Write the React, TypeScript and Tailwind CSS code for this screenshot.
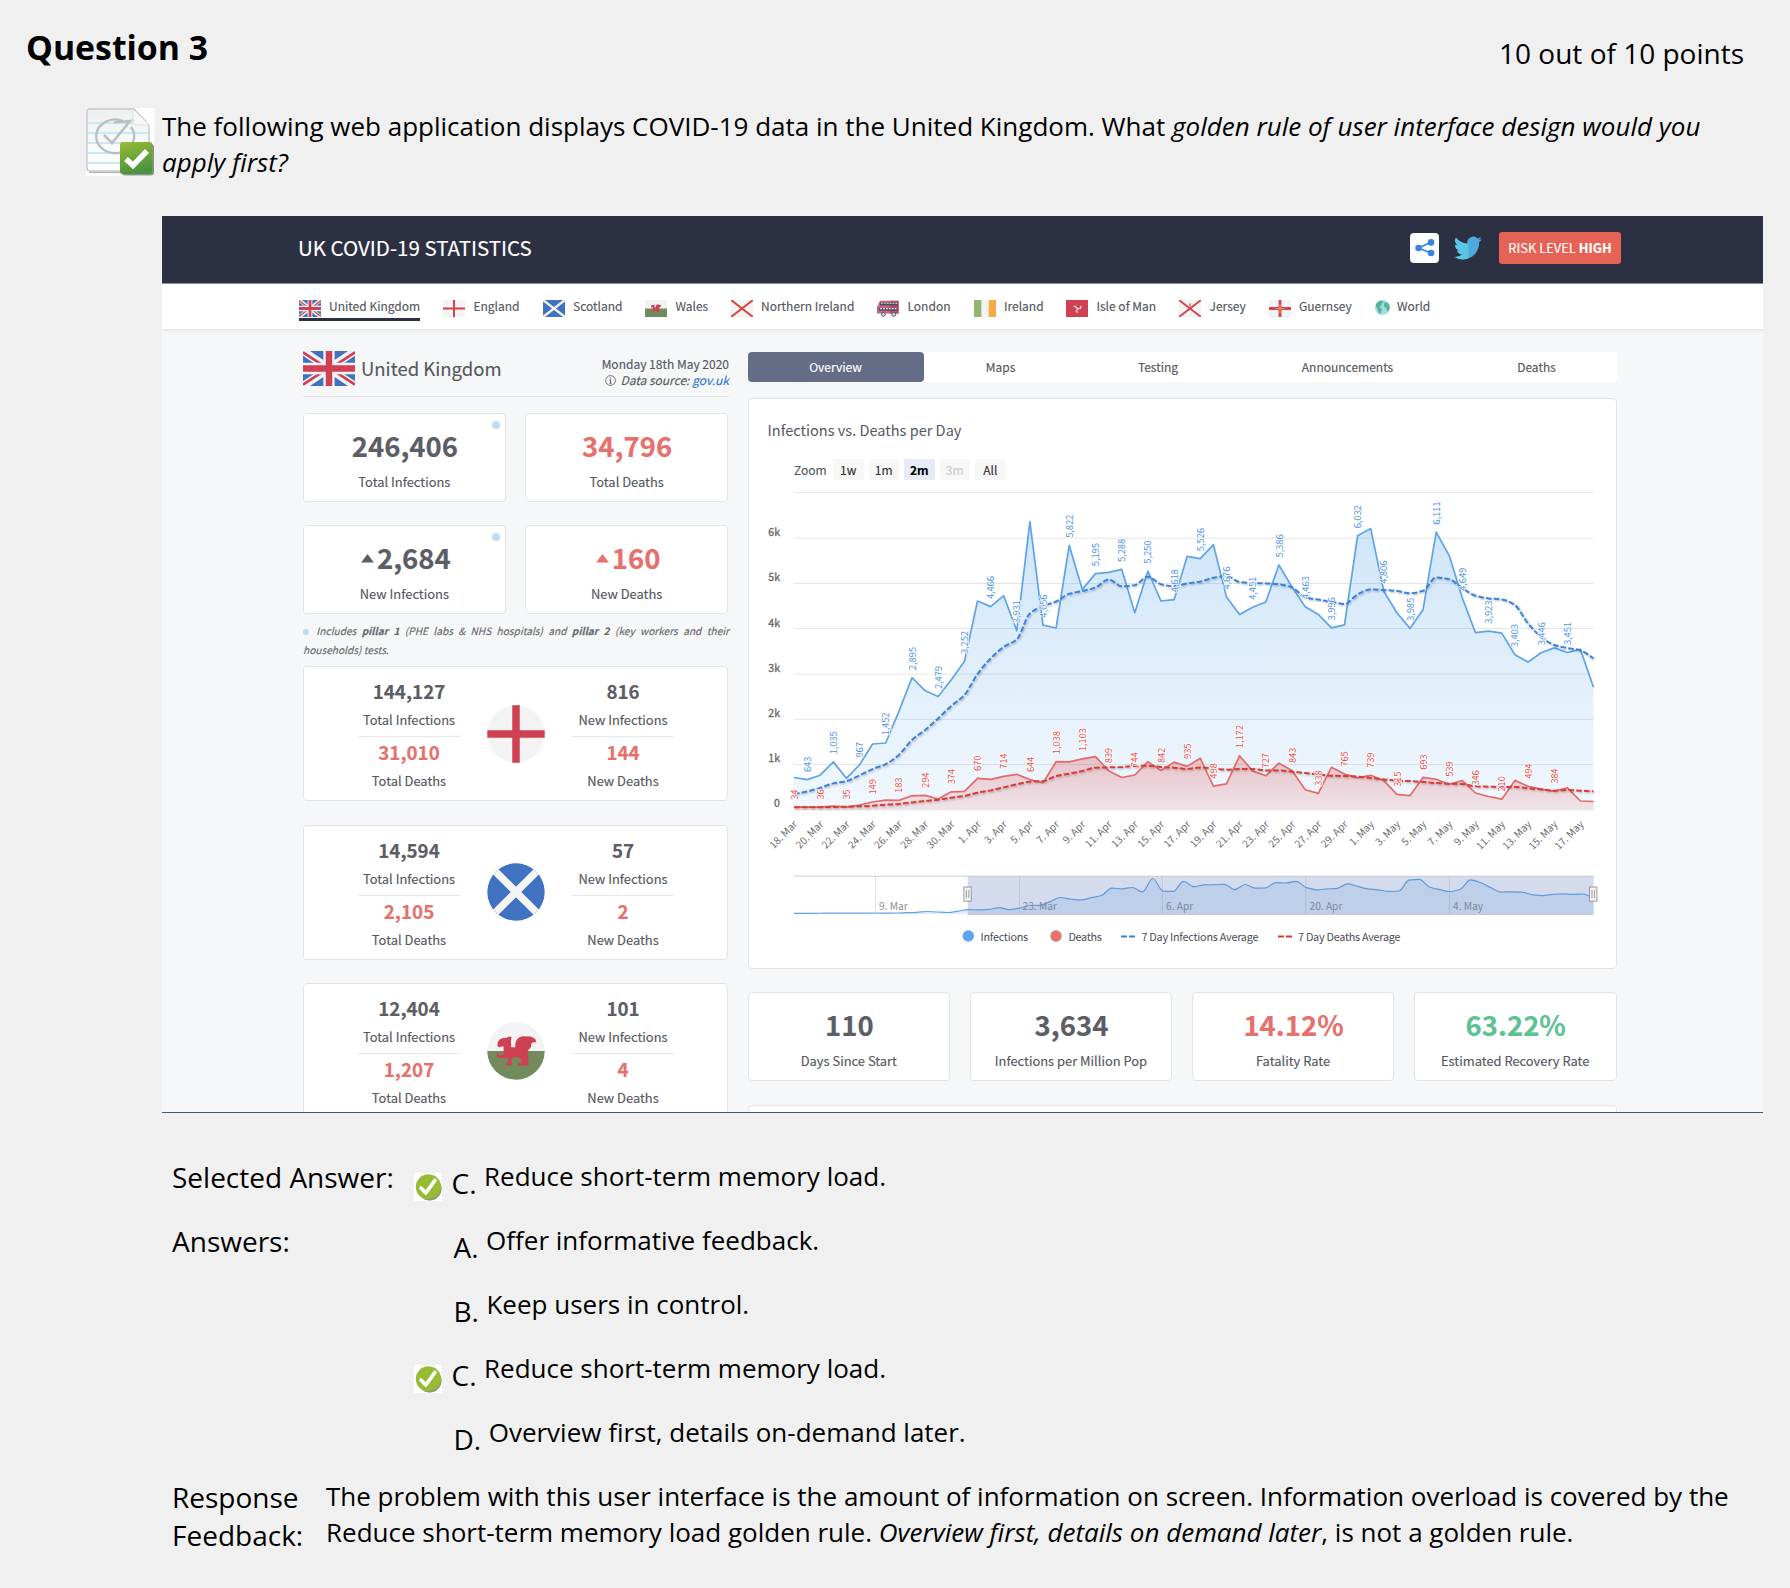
import React from "react";

/* ---------- data ---------- */

const infections = [
  690, 643, 740, 1035, 672, 967, 1430, 1452, 2150, 2895, 2608, 2479, 2850, 3252, 4590, 4466, 4707, 3931, 6343, 4056,
  3993, 5822, 4847, 5195, 5223, 5288, 4330, 5250, 4590, 4618, 5577, 5526, 5834, 4676, 4295, 4451, 4567, 5386, 4900,
  4463, 4295, 3996, 4065, 6032, 6190, 4806, 4330, 3985, 4405, 6111, 5590, 4649, 3890, 3923, 3880, 3403, 3240, 3446,
  3553, 3451, 3520, 2684,
];

const deaths = [
  34, 38, 36, 55, 35, 80, 149, 190, 183, 284, 294, 215, 374, 382, 670, 650, 714, 760, 644, 570, 1038, 1034, 1103, 1150,
  839, 690, 744, 1040, 842, 1030, 935, 1115, 498, 550, 1172, 830, 727, 1005, 843, 420, 338, 915, 765, 680, 739, 620,
  315, 288, 693, 650, 539, 620, 346, 270, 210, 625, 494, 430, 384, 465, 170, 160,
];

const infectionsAvg = [
  320, 380, 460, 560, 610, 735, 875, 985, 1190, 1520, 1740, 1995, 2270, 2510, 2975, 3320, 3575, 3740, 4315, 4480, 4580,
  4750, 4810, 4885, 5068, 4915, 4940, 5127, 4960, 4915, 4980, 5016, 5105, 5135, 5010, 4987, 4980, 4957, 4890, 4670, 4620,
  4575, 4523, 4735, 4847, 4832, 4810, 4760, 4815, 5112, 5068, 4870, 4707, 4648, 4626, 4500, 4095, 3800, 3617, 3551, 3500,
  3322,
];

const deathsAvg = [
  30, 30, 30, 37, 44, 52, 66, 88, 103, 140, 170, 199, 243, 280, 354, 405, 471, 538, 597, 611, 722, 773, 832, 906, 913,
  920, 943, 950, 920, 906, 877, 913, 891, 862, 877, 877, 847, 847, 818, 788, 759, 729, 722, 707, 678, 648, 619, 611, 589,
  567, 552, 545, 494, 486, 479, 479, 449, 427, 398, 412, 398, 383,
];

const earlyMarch = [10, 20, 25, 30, 40, 50, 45, 60, 70, 60, 70, 130, 200, 340, 250, 160, 400];

const fmt = (n: number) => n.toLocaleString("en-US");

/* ---------- flags ---------- */

type FlagProps = { className?: string };

function UnionFlag({ className = "" }: FlagProps) {
  return (
    <svg viewBox="0 0 60 40" preserveAspectRatio="none" className={className}>
      <rect width="60" height="40" fill="#3f72c1" />
      <path d="M0 0L60 40M60 0L0 40" stroke="#f3f3f3" strokeWidth="9" />
      <path d="M0 1.5L27 19M33 21L60 38.5M60 1.5L33 19M27 21L0 38.5" stroke="#d04053" strokeWidth="3" />
      <path d="M30 0V40M0 20H60" stroke="#f3f3f3" strokeWidth="13" />
      <path d="M30 0V40M0 20H60" stroke="#d04053" strokeWidth="7.5" />
    </svg>
  );
}

function England({ className = "" }: FlagProps) {
  return (
    <svg viewBox="0 0 22 17" className={className}>
      <rect width="22" height="17" fill="#f3f3f3" />
      <path d="M11 0V17M0 8.5H22" stroke="#d6404f" strokeWidth="2" />
    </svg>
  );
}

function Scotland({ className = "" }: FlagProps) {
  return (
    <svg viewBox="0 0 22 17" className={className}>
      <rect width="22" height="17" fill="#3f72c1" />
      <path d="M0 0L22 17M22 0L0 17" stroke="#f3f3f3" strokeWidth="2.4" />
    </svg>
  );
}

const dragonPath =
  "M10.4 22.6C10.8 19 13 16.2 17 16L20.5 15.6L22 14.4L24.6 15L24 18L24.2 25.3H28.4C27.6 19.5 30.6 14.6 36.5 14.3L44 14.6L48.3 17L49.4 20.6C46.8 19.8 44.6 20.2 44.2 22.4C44.4 24.8 43.4 26.4 41.6 27.4C41.4 29.2 41 30.2 40 30.6L41.4 33V43.4H31V40.8H34.4L33.8 37L31.6 35.4H26.4L24.4 37.4V43.4H18.6V40.8H20.8V36H12L9.8 35V31.3H12.4L12.6 33.4L16.6 32.6V24.4H14L13 25.2L10.6 24.6Z";

function Wales({ className = "" }: FlagProps) {
  return (
    <svg viewBox="0 0 22 17" className={className}>
      <rect width="22" height="8.5" fill="#f3f3f3" />
      <rect y="8.5" width="22" height="8.5" fill="#738b5c" />
      <path d={dragonPath} transform="translate(3.2 .8) scale(.265)" fill="#d04053" />
    </svg>
  );
}

function NorthernIreland({ className = "" }: FlagProps) {
  return (
    <svg viewBox="0 0 22 17" className={className}>
      <rect width="22" height="17" fill="#f3f3f3" />
      <path d="M0 0L22 17M22 0L0 17" stroke="#d8453c" strokeWidth="2" />
    </svg>
  );
}

function Bus({ className = "" }: FlagProps) {
  return (
    <svg viewBox="0 0 22 17" className={className}>
      <path d="M3.5 .8H21.6V13.6H1L1.2 4.5Q1.8 1.4 3.5 .8Z" fill="#dd5c7e" />
      <path d="M13 .8H21.6V13.6H13Z" fill="#cc3f68" />
      <path d="M3.2 2.6H21V5.4H2.9Z" fill="#3d5566" />
      <path d="M2.2 7.8H21V10.8H1.8Z" fill="#3d5566" />
      <path d="M4 3.3H20.4M3.2 8.6H20.4" stroke="#e9eef2" strokeWidth="1.1" strokeDasharray="1.8 1.1" />
      <path d="M.6 6V13.5" stroke="#4c6475" strokeWidth=".9" />
      <circle cx="6.3" cy="14.4" r="1.9" fill="#d9e8f0" stroke="#40596b" strokeWidth="1" />
      <circle cx="16.8" cy="14.4" r="1.9" fill="#d9e8f0" stroke="#40596b" strokeWidth="1" />
    </svg>
  );
}

function Ireland({ className = "" }: FlagProps) {
  return (
    <svg viewBox="0 0 22 17" className={className}>
      <rect width="22" height="17" fill="#f3f3f3" />
      <rect width="7.3" height="17" fill="#90b56e" />
      <rect x="14.7" width="7.3" height="17" fill="#f7ab45" />
    </svg>
  );
}

function IsleOfMan({ className = "" }: FlagProps) {
  return (
    <svg viewBox="0 0 22 17" className={className}>
      <rect width="22" height="17" fill="#d04053" />
      <path
        d="M11.4 8.8L9.4 6.2L7.6 6.6M11.4 8.8L14.6 8.2L14.8 5.8M11.4 8.8L10.2 11.4L12 12.4"
        fill="none"
        stroke="#f6dfe0"
        strokeWidth="1.3"
      />
    </svg>
  );
}

function Jersey({ className = "" }: FlagProps) {
  return (
    <svg viewBox="0 0 22 17" className={className}>
      <rect width="22" height="17" fill="#f3f3f3" />
      <path d="M0 0L22 17M22 0L0 17" stroke="#d6404f" strokeWidth="1.8" />
      <path d="M9.8 3.4H12.2L11.9 6L11 7L10.1 6Z" fill="#e58a5a" />
    </svg>
  );
}

function Guernsey({ className = "" }: FlagProps) {
  return (
    <svg viewBox="0 0 22 17" className={className}>
      <rect width="22" height="17" fill="#f3f3f3" />
      <path d="M11 0V17M0 8.5H22" stroke="#d6404f" strokeWidth="2.8" />
      <path d="M11 4.2V12.8M6.4 8.5H15.6" stroke="#f3ac55" strokeWidth=".8" />
    </svg>
  );
}

function Globe({ className = "" }: FlagProps) {
  return (
    <svg viewBox="0 0 16 16" className={className}>
      <circle cx="8" cy="8" r="8" fill="#a3dbe9" />
      <path d="M1 4.2L4.5 1L7.5 .8L9 2.5L7 4L6.8 6L4.6 7.2L6.4 9L7.6 10.5L6.4 13L5.6 15.2L3.4 13L3 10L1.4 7.6Z" fill="#55b58e" />
      <path d="M10.5 2.4L13.6 3.2L15.4 6L15.6 9.4L13.6 12.4L12.4 10.6L12.4 8.4L10 7.4L9.6 5Z" fill="#55b58e" />
    </svg>
  );
}

/* ---------- chart ---------- */

const PLOT_X = 46;
const STEP = 799.5 / 61;
const ZERO = 300.7;
const px = (i: number) => PLOT_X + i * STEP;
const py = (v: number) => ZERO - v * 0.04525;

const linePath = (vals: number[]) =>
  vals.map((v, i) => `${i ? "L" : "M"}${px(i).toFixed(1)} ${py(v).toFixed(1)}`).join("");

const areaPath = (vals: number[]) => `${linePath(vals)}V301.6H${PLOT_X}Z`;

/* Monotone cubic curve through the points. */
function smooth(pts: number[][]) {
  const n = pts.length;
  const s = pts.slice(1).map((p, i) => (p[1] - pts[i][1]) / (p[0] - pts[i][0]));
  const m = pts.map((_, i) => {
    if (i === 0) return s[0];
    if (i === n - 1) return s[n - 2];
    if (s[i - 1] * s[i] <= 0) return 0;
    return (2 * s[i - 1] * s[i]) / (s[i - 1] + s[i]);
  });
  let d = `M${pts[0][0]} ${pts[0][1]}`;
  for (let i = 1; i < n; i++) {
    const h = (pts[i][0] - pts[i - 1][0]) / 3;
    d += `C${(pts[i - 1][0] + h).toFixed(1)} ${(pts[i - 1][1] + m[i - 1] * h).toFixed(1)} ${(pts[i][0] - h).toFixed(1)} ${(pts[i][1] - m[i] * h).toFixed(1)} ${pts[i][0].toFixed(1)} ${pts[i][1].toFixed(1)}`;
  }
  return d;
}

const avgPath = (vals: number[]) => smooth(vals.map((v, i) => [px(i), py(v)]));

const navPath = smooth([...earlyMarch, ...infections].map((v, i) => [PLOT_X + i * 10.25, 405.4 - v * 0.0055]));

const dateLabel = (i: number) => {
  const d = 18 + i;
  if (d <= 31) return `${d}. Mar`;
  if (d <= 61) return `${d - 31}. Apr`;
  return `${d - 61}. May`;
};

const evens = Array.from({ length: 31 }, (_, i) => i * 2);
const gridYs = [-15.5, 30.2, 75.5, 120.5, 166.2, 211.3, 256.5, 301.8];

function PointLabel({ i, v, color }: { i: number; v: number; color: string }) {
  const t = fmt(v);
  const len = t.length > 3 ? 23.2 : t.length * 5.15;
  const place = `translate(${px(i) + 3.6} ${py(v) - 7.5}) rotate(-90)`;
  return (
    <text
      transform={place}
      fontSize="9.6"
      fill={color}
      stroke="#fff"
      strokeWidth="1.4"
      paintOrder="stroke"
      strokeLinejoin="round"
      textLength={len}
    >
      {t}
    </text>
  );
}

function Handle({ x }: { x: number }) {
  return (
    <g transform={`translate(${x} 386)`}>
      <rect x="-3.7" y="-7" width="7.4" height="14.2" fill="#f2f2f2" stroke="#999" />
      <path d="M-1.2 -4V4M1.2 -4V4" stroke="#999" strokeWidth=".9" />
    </g>
  );
}

function Chart() {
  return (
    <svg viewBox="0 -28 868 468" className="block h-[468px] w-[868px]">
      <defs>
        <linearGradient id="blueFill" x1="0" y1="0" x2="0" y2="1">
          <stop offset="0" stopColor="#4f9fe8" stopOpacity=".27" />
          <stop offset="1" stopColor="#4f9fe8" stopOpacity=".08" />
        </linearGradient>
        <linearGradient id="redFill" x1="0" y1="0" x2="0" y2="1">
          <stop offset="0" stopColor="#e05555" stopOpacity=".32" />
          <stop offset="1" stopColor="#e05555" stopOpacity=".12" />
        </linearGradient>
        <filter id="soft" x="-5%" y="-20%" width="110%" height="140%">
          <feDropShadow dx="1" dy="1" stdDeviation="0.8" floodColor="#000" floodOpacity=".3" />
        </filter>
      </defs>

      {gridYs.map((y) => (
        <path key={y} d={`M${PLOT_X} ${y}H845.5`} stroke="#e6e6e6" />
      ))}
      <g fontSize="10.6" fill="#666" textAnchor="end">
        {["6k", "5k", "4k", "3k", "2k", "1k", "0"].map((t, i) => (
          <text key={t} x="32" y={28.2 + i * 45.2} stroke="#666" strokeWidth=".3">
            {t}
          </text>
        ))}
      </g>

      <path d={areaPath(infections)} fill="url(#blueFill)" />
      <path d={linePath(infections)} fill="none" stroke="#5ea3ea" strokeWidth="1.7" strokeLinejoin="round" />
      <path d={areaPath(deaths)} fill="url(#redFill)" />
      <path d={linePath(deaths)} fill="none" stroke="#e26b6b" strokeWidth="1.7" strokeLinejoin="round" />
      <g fill="none" strokeWidth="2" strokeDasharray="5.6 2.2" filter="url(#soft)">
        <path d={avgPath(infectionsAvg)} stroke="#3a82dc" />
        <path d={avgPath(deathsAvg)} stroke="#dc3a35" />
      </g>

      {infections.map((v, i) => i % 2 === 1 && i < 61 && <PointLabel key={i} i={i} v={v} color="#5094ea" />)}
      {deaths.map((v, i) => i % 2 === 0 && i < 60 && <PointLabel key={i} i={i} v={v} color="#e4524c" />)}

      <g fontSize="10.2" fill="#6b6b6b" textAnchor="end">
        {evens.map((i) => (
          <text key={i} transform={`translate(${px(i) + 4} 317) rotate(-45)`}>
            {dateLabel(i)}
          </text>
        ))}
      </g>

      {/* range navigator */}
      {[127.5, 271.5, 414.4, 557.8, 701.4].map((x) => (
        <path key={x} d={`M${x} 368V406`} stroke="#e2e2e2" />
      ))}
      <path d={`${navPath}V406H${PLOT_X}Z`} fill="#4f9fe8" fillOpacity=".18" />
      <path d={navPath} fill="none" stroke="#5ea3ea" strokeWidth="1.2" />
      <g fontSize="10.2" fill="#8c8c8c">
        {["9. Mar", "23. Mar", "6. Apr", "20. Apr", "4. May"].map((t, i) => (
          <text key={t} x={[131, 274.5, 418, 561.5, 705][i]} y="402.3">
            {t}
          </text>
        ))}
      </g>
      <rect x="219.6" y="368" width="626" height="38" fill="#6a83be" fillOpacity=".29" />
      <path d="M46 368.2H845.5" stroke="#cccccc" />
      <path d="M219.6 406.3H845.5" stroke="#b9bfca" />
      <Handle x={219.6} />
      <Handle x={845.2} />

      {/* legend */}
      <circle cx="220.3" cy="428" r="5.7" fill="#62a4ec" />
      <circle cx="308" cy="428" r="5.7" fill="#e5716e" />
      <path d="M373 428.5H387" stroke="#3a82dc" strokeWidth="2" strokeDasharray="6 2" />
      <path d="M530 428.5H544" stroke="#dc3a35" strokeWidth="2" strokeDasharray="6 2" />
      <g fontSize="10.8" fill="#4a4d55">
        <text x="232.6" y="432.5" textLength="47.5">Infections</text>
        <text x="320.4" y="432.5" textLength="33.5">Deaths</text>
        <text x="393.4" y="432.5" textLength="117">7 Day Infections Average</text>
        <text x="550" y="432.5" textLength="102.5">7 Day Deaths Average</text>
      </g>
    </svg>
  );
}

/* ---------- pieces ---------- */

const navItems: [string, React.FC<FlagProps>][] = [
  ["United Kingdom", UnionFlag],
  ["England", England],
  ["Scotland", Scotland],
  ["Wales", Wales],
  ["Northern Ireland", NorthernIreland],
  ["London", Bus],
  ["Ireland", Ireland],
  ["Isle of Man", IsleOfMan],
  ["Jersey", Jersey],
  ["Guernsey", Guernsey],
];

const cardBase = "rounded-[4px] border border-[#e2e4e7] bg-white";

function Up({ className }: { className: string }) {
  return (
    <svg viewBox="0 0 12 8" className={`mt-[3px] mr-[3px] h-[8.5px] w-[13px] ${className}`}>
      <path d="M0 8L6 0L12 8Z" fill="currentColor" />
    </svg>
  );
}

type StatProps = { value: string; label: string; color: string; up?: boolean; dot?: boolean };

function StatCard({ value, label, color, up, dot }: StatProps) {
  return (
    <div className={`relative flex h-[89px] flex-col items-center pt-[15px] ${cardBase}`}>
      <div className={`flex h-8 items-center text-[27.5px] leading-8 font-bold ${color} ${up ? "pl-[3px]" : "pl-px"}`}>
        {up && <Up className={color} />}
        {value}
      </div>
      <div className="mt-[11px] text-[12.9px] leading-5 text-[#55585f]">{label}</div>
      {dot && <span className="absolute top-[7px] right-[5px] size-2 rounded-full bg-[#c1daf0]" />}
    </div>
  );
}

function NationColumn({ kind, inf, dead }: { kind: string; inf: string; dead: string }) {
  return (
    <div className="flex w-[102px] flex-col items-center text-[12.9px] leading-5 text-[#55585f]">
      <div className="text-[18.8px] leading-6 font-bold text-[#5c5e66]">{inf}</div>
      <div className="mt-[7px]">{kind} Infections</div>
      <div className="mt-[6px] h-px w-full bg-[#e6e8ea]" />
      <div className="mt-[3px] text-[18.8px] leading-6 font-bold text-[#e6706b]">{dead}</div>
      <div className="mt-[7px]">{kind} Deaths</div>
    </div>
  );
}

function NationCard({ data, children }: { data: string[]; children: React.ReactNode }) {
  return (
    <div className={`flex h-[135px] justify-between pt-[12px] pr-[53px] pl-[54px] ${cardBase}`}>
      <NationColumn kind="Total" inf={data[0]} dead={data[1]} />
      <svg viewBox="0 0 58 58" className="mt-[25.5px] size-[58px]">
        {children}
      </svg>
      <NationColumn kind="New" inf={data[2]} dead={data[3]} />
    </div>
  );
}

function ShareIcon() {
  return (
    <div className="flex h-[30px] w-[29px] items-center justify-center rounded-[4px] bg-white">
      <svg viewBox="0 0 20 18" className="h-[18px] w-[20px]">
        <path d="M3.5 9L16 3.2M3.5 9L16 14" stroke="#3585dd" strokeWidth="1.8" />
        <circle cx="3.6" cy="9" r="3.3" fill="#3585dd" />
        <circle cx="16" cy="3.4" r="3.3" fill="#3585dd" />
        <circle cx="16" cy="14" r="3.3" fill="#3585dd" />
      </svg>
    </div>
  );
}

function TwitterIcon() {
  const bird =
    "M23.95 4.57a10 10 0 0 1-2.82.77 4.96 4.96 0 0 0 2.16-2.72 9.9 9.9 0 0 1-3.12 1.19 4.92 4.92 0 0 0-8.38 4.48A13.93 13.93 0 0 1 1.64 3.16a4.92 4.92 0 0 0 1.52 6.57 4.9 4.9 0 0 1-2.23-.61v.06a4.92 4.92 0 0 0 3.95 4.83 5 5 0 0 1-2.21.08 4.94 4.94 0 0 0 4.6 3.42A9.87 9.87 0 0 1 0 19.54a14 14 0 0 0 7.55 2.21c9.05 0 14-7.5 14-13.98 0-.21 0-.42-.02-.63a9.94 9.94 0 0 0 2.46-2.55z";
  return (
    <svg viewBox="0 0 24 24" className="size-[28px]">
      <defs>
        <clipPath id="birdLeft">
          <rect width="12.4" height="24" />
        </clipPath>
      </defs>
      <path d={bird} fill="#4fa9dd" />
      <path d={bird} fill="#5bc6e6" clipPath="url(#birdLeft)" />
    </svg>
  );
}

function QuestionIcon() {
  return (
    <svg viewBox="0 0 68 68" className="h-[68px] w-[68px] shrink-0">
      <defs>
        <linearGradient id="page" x1="0" y1="0" x2="0" y2="1">
          <stop offset="0" stopColor="#eef0f0" />
          <stop offset="1" stopColor="#fff" />
        </linearGradient>
        <linearGradient id="tick" x1="0" y1="0" x2=".3" y2="1">
          <stop offset="0" stopColor="#9bbb34" />
          <stop offset="1" stopColor="#4a9440" />
        </linearGradient>
      </defs>
      <rect width="68" height="68" fill="#fff" />
      <path d="M3 1H48L63 17V60Q63 63 60 63H4Q1 63 1 60V3Q1 1 3 1Z" fill="url(#page)" stroke="#c3c6c6" strokeWidth="1.4" />
      <path d="M3 64.5H60" stroke="#aaa" strokeWidth="1" />
      <path d="M2 15H60M2 25H62M2 35H62M2 45H62M2 55H62" stroke="#c9e9f7" strokeWidth="1.8" />
      <path d="M47 1L63 17H51Q47 17 47 13Z" fill="#f7f7f7" stroke="#dcdcdc" />
      <path d="M51 0H68V20L63 16Z" fill="#fff" />
      <path d="M37 13A19 16.8 0 1 0 45 19" fill="none" stroke="#bcbfc0" strokeWidth="2.4" />
      <path d="M18 27L26 35L44 13L28 14.5" fill="none" stroke="#bcbfc0" strokeWidth="2.6" />
      <rect x="36" y="36" width="32" height="31.5" rx="3" fill="#8d938a" />
      <rect x="34" y="34" width="32.5" height="32" rx="3" fill="url(#tick)" />
      <path d="M40 51L47 57.5L61 43" fill="none" stroke="#fff" strokeWidth="5.5" />
    </svg>
  );
}

function CorrectIcon() {
  return (
    <svg viewBox="0 0 28 28" className="size-[28px]">
      <rect width="28" height="28" fill="#fff" />
      <circle cx="15.6" cy="15.6" r="12" fill="#8b8f86" />
      <circle cx="14.4" cy="13.8" r="12.6" fill="#99bb33" />
      <path d="M7 15L11.8 20L20.8 7.5" fill="none" stroke="#fff" strokeWidth="3.8" strokeLinecap="round" strokeLinejoin="round" />
    </svg>
  );
}

type AnswerProps = { label?: string; letter: string; text: string; correct?: boolean; indent: string };

function AnswerRow({ label, letter, text, correct, indent }: AnswerProps) {
  return (
    <div className="flex h-16">
      <div className="w-[242px] shrink-0 text-[28px] leading-[38px]">{label}</div>
      <div className="w-[37.5px] shrink-0 pt-[15px]">{correct && <CorrectIcon />}</div>
      <div className={`flex ${indent}`}>
        <div className="pt-[6px] text-[28px] leading-[38px]">{letter}</div>
        <div className="ml-[7.5px] text-[26px] leading-[37px]">{text}</div>
      </div>
    </div>
  );
}

const sans = "font-['Noto_Sans_CJK_SC','Noto_Sans',sans-serif]";

function Dashboard() {
  return (
    <div
      className={`ml-[162px] h-[897px] w-[1601px] overflow-hidden border-b border-[#3f5872] bg-[#f6f7f9] text-[#55585f] [-webkit-text-stroke:0.15px] ${sans}`}
    >
      <header className="flex h-[68px] items-center border-b border-[#8a8e9b] bg-[#2b3042] pr-[142px] pb-[3px] pl-[136px]">
        <h2 className="mt-[-3px] flex-1 text-[20.5px] leading-8 text-white">UK COVID-19 STATISTICS</h2>
        <div className="flex items-center">
          <ShareIcon />
          <div className="ml-[15px]">
            <TwitterIcon />
          </div>
          <div className="ml-[17px] flex h-[32px] w-[122px] items-center justify-center rounded-[3px] bg-[#e66255] text-[12.9px] whitespace-pre text-white">
            RISK LEVEL <b>HIGH</b>
          </div>
        </div>
      </header>

      <nav className="h-[46px] border-b border-[#e6e8eb] bg-white pl-[137px] text-[12px] shadow-[0_1px_3px_rgba(0,0,0,0.06)]">
        <div className="grid grid-cols-[144.4px_99.6px_102.5px_85.5px_146.5px_96.5px_92.5px_113px_89.5px_106px_60px] pt-[14px]">
          {navItems.map(([name, Flag], i) => (
            <div key={name} className="flex">
              <div className={`flex h-[23px] items-start ${i === 0 ? "border-b-[3px] border-[#2b3042]" : ""}`}>
                <Flag className="mt-[2px] mr-[8px] h-[17px] w-[22px]" />
                <span className="mt-[-2px] leading-5 whitespace-nowrap">{name}</span>
              </div>
            </div>
          ))}
          <div className="flex items-start">
            <Globe className="mt-[2px] mr-[7px] size-[15px]" />
            <span className="mt-[-2px] leading-5">World</span>
          </div>
        </div>
      </nav>

      <div className="flex gap-[19.5px] pl-[141px]">
        <section className="w-[425px] pt-[21px]">
          <div className="-mr-px flex h-[46px] border-b border-[#e3e5e8]">
            <UnionFlag className="h-[35px] w-[52px]" />
            <h3 className="ml-[6px] flex-1 text-[18.5px] leading-[34px]">United Kingdom</h3>
            <div className="text-right text-[12px] leading-4">
              <div className="pt-[5px]">Monday 18th May 2020</div>
              <div className="flex items-center justify-end gap-1 italic">
                <svg viewBox="0 0 12 12" className="size-[11px]" fill="none" stroke="#55585f">
                  <circle cx="6" cy="6" r="5.3" strokeWidth=".9" />
                  <path d="M6 5V9M4.8 5.2H6M4.8 9H7.2M6 2.6V3.8" strokeWidth="1" />
                </svg>
                <span>
                  Data source: <span className="text-[#3079d8]">gov.uk</span>
                </span>
              </div>
            </div>
          </div>

          <div className="mt-4 grid grid-cols-2 gap-x-[19.5px] gap-y-[23px]">
            <StatCard value="246,406" label="Total Infections" color="text-[#5c5e66]" dot />
            <StatCard value="34,796" label="Total Deaths" color="text-[#e6706b]" />
            <StatCard value="2,684" label="New Infections" color="text-[#5c5e66]" up dot />
            <StatCard value="160" label="New Deaths" color="text-[#e6706b]" up />
          </div>

          <p className="-mr-px h-[52px] pt-[8px] text-justify text-[10.15px] leading-[18.5px] text-[#676a71] italic">
            <span className="mr-[2px] inline-block size-[6px] rounded-full bg-[#c1daf0]" /> Includes <b>pillar 1</b> (PHE labs &amp; NHS
            hospitals) and <b>pillar 2</b> (key workers and their households) tests.
          </p>

          <div className="flex flex-col gap-[23.6px]">
            <NationCard data={["144,127", "31,010", "816", "144"]}>
              <circle cx="29" cy="29" r="28.7" fill="#f3f3f3" />
              <path d="M29 .3V57.7M.3 29H57.7" stroke="#d04053" strokeWidth="7.5" />
            </NationCard>
            <NationCard data={["14,594", "2,105", "57", "2"]}>
              <circle cx="29" cy="29" r="28.7" fill="#3f72c1" />
              <path d="M8.8 8.8L49.2 49.2M49.2 8.8L8.8 49.2" stroke="#f3f3f3" strokeWidth="7.5" />
            </NationCard>
            <NationCard data={["12,404", "1,207", "101", "4"]}>
              <path d="M.3 29A28.7 28.7 0 0 1 57.7 29Z" fill="#f3f3f3" />
              <path d="M.3 29A28.7 28.7 0 0 0 57.7 29Z" fill="#738b5c" />
              <path d={dragonPath} fill="#d04053" />
            </NationCard>
          </div>
        </section>

        <section className="w-[869px] pt-[22px]">
          <div className="flex h-[30px] items-center rounded-[4px] bg-white text-center text-[12px]">
            <div className="h-[30px] w-[176px] rounded-[4px] bg-[#646d85] leading-[29px] text-white">Overview</div>
            <div className="w-[154px]">Maps</div>
            <div className="w-[161px]">Testing</div>
            <div className="w-[218px]">Announcements</div>
            <div className="w-[160px]">Deaths</div>
          </div>

          <div className={`mt-4 h-[571px] pt-[19px] ${cardBase}`}>
            <h4 className="pl-[19px] text-[14.55px] leading-6 [-webkit-text-stroke:0px]">Infections vs. Deaths per Day</h4>
            <div className="mt-[17px] flex h-[21px] items-center pl-[45.5px] text-[12px]">
              <span className="w-[39px] leading-[19px]">Zoom</span>
              <div className="flex gap-[5px] text-center leading-[21px] text-[#333]">
                <span className="w-[30.5px] rounded-[2px] bg-[#f7f7f7]">1w</span>
                <span className="w-[30.5px] rounded-[2px] bg-[#f7f7f7]">1m</span>
                <span className="w-[30.5px] rounded-[2px] bg-[#e6ebf5] font-bold text-black">2m</span>
                <span className="w-[30.5px] rounded-[2px] bg-[#f7f7f7] text-[#ccc]">3m</span>
                <span className="w-[30.5px] rounded-[2px] bg-[#f7f7f7]">All</span>
              </div>
            </div>
            <div className="-ml-px [-webkit-text-stroke:0px]">
              <Chart />
            </div>
          </div>

          <div className="mt-[23px] grid grid-cols-4 gap-[19.5px]">
            <StatCard value="110" label="Days Since Start" color="text-[#5c5e66]" />
            <StatCard value="3,634" label="Infections per Million Pop" color="text-[#5c5e66]" />
            <StatCard value="14.12%" label="Fatality Rate" color="text-[#e6706b]" />
            <StatCard value="63.22%" label="Estimated Recovery Rate" color="text-[#5dc192]" />
          </div>
          <div className={`mt-[24px] h-10 ${cardBase}`} />
        </section>
      </div>
    </div>
  );
}

export default function App() {
  return (
    <main className="h-[1588px] w-[1790px] overflow-hidden bg-[#f0f0f0] font-['Open_Sans',sans-serif] text-black">
      <div className="flex h-[108px] justify-between pr-[46px] pl-[26px]">
        <h1 className="pt-[24px] text-[33.8px] leading-[46px] font-bold">Question 3</h1>
        <div className="pt-[34px] text-[28px] leading-[38px]">10 out of 10 points</div>
      </div>

      <div className="flex h-[108px] pl-[86px]">
        <QuestionIcon />
        <p className="ml-[8px] w-[1600px] text-[26px] leading-[36px]">
          The following web application displays COVID-19 data in the United Kingdom. What{" "}
          <i>
            golden rule of user interface design would you
            <br />
            apply first?
          </i>
        </p>
      </div>

      <Dashboard />

      <div className="pt-[45px] pl-[172px]">
        <AnswerRow label="Selected Answer:" letter="C." text="Reduce short-term memory load." correct indent="pl-0" />
        <AnswerRow label="Answers:" letter="A." text="Offer informative feedback." indent="pl-[2px]" />
        <AnswerRow letter="B." text="Keep users in control." indent="pl-[2px]" />
        <AnswerRow letter="C." text="Reduce short-term memory load." correct indent="pl-0" />
        <AnswerRow letter="D." text="Overview first, details on-demand later." indent="pl-[2px]" />
        <div className="flex">
          <div className="w-[154px] text-[28px] leading-[38px]">
            Response
            <br />
            Feedback:
          </div>
          <p className="text-[26px] leading-[36px]">
            The problem with this user interface is the amount of information on screen. Information overload is covered by the
            <br />
            Reduce short-term memory load golden rule. <i>Overview first, details on demand later</i>, is not a golden rule.
          </p>
        </div>
      </div>
    </main>
  );
}
